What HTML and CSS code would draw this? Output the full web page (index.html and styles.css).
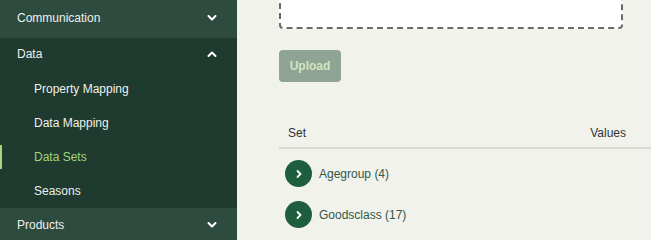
FILE: index.html
```html
<!DOCTYPE html>
<html>
<head>
<meta charset="utf-8">
<link rel="stylesheet" href="styles.css">
</head>
<body>
<div class="app">
  <nav class="sidebar">
    <div class="group group-light group-first">
      <div class="group-head">
        <span>Communication</span>
        <svg class="chev" width="10" height="6" viewBox="0 0 10 6"><path d="M1.5 1l3.5 3.5 3.5-3.5" fill="none" stroke="#fff" stroke-width="2" stroke-linecap="round" stroke-linejoin="round"/></svg>
      </div>
    </div>
    <div class="group group-dark">
      <div class="group-head group-head-open">
        <span>Data</span>
        <svg class="chev" width="10" height="6" viewBox="0 0 10 6"><path d="M1.5 5l3.5-3.5 3.5 3.5" fill="none" stroke="#fff" stroke-width="2" stroke-linecap="round" stroke-linejoin="round"/></svg>
      </div>
      <div class="item">Property Mapping</div>
      <div class="item">Data Mapping</div>
      <div class="item active">Data Sets</div>
      <div class="item">Seasons</div>
    </div>
    <div class="group group-light">
      <div class="group-head">
        <span>Products</span>
        <svg class="chev" width="10" height="6" viewBox="0 0 10 6"><path d="M1.5 1l3.5 3.5 3.5-3.5" fill="none" stroke="#fff" stroke-width="2" stroke-linecap="round" stroke-linejoin="round"/></svg>
      </div>
    </div>
  </nav>
  <main class="main">
    <div class="dropzone"></div>
    <button class="upload">Upload</button>
    <div class="table">
      <div class="thead">
        <span class="th-set">Set</span>
        <span class="th-values">Values</span>
      </div>
      <div class="rows">
        <div class="row">
          <span class="expand"><svg width="8" height="10" viewBox="0 0 8 10"><path d="M2.5 2l3 3-3 3" fill="none" stroke="#fff" stroke-width="1.8" stroke-linecap="round" stroke-linejoin="round"/></svg></span>
          <span class="row-label">Agegroup (4)</span>
        </div>
        <div class="row">
          <span class="expand"><svg width="8" height="10" viewBox="0 0 8 10"><path d="M2.5 2l3 3-3 3" fill="none" stroke="#fff" stroke-width="1.8" stroke-linecap="round" stroke-linejoin="round"/></svg></span>
          <span class="row-label">Goodsclass (17)</span>
        </div>
      </div>
    </div>
  </main>
</div>
</body>
</html>
```

FILE: styles.css
```css
* { box-sizing: border-box; }
html, body {
  margin: 0;
  padding: 0;
  width: 651px;
  height: 240px;
  overflow: hidden;
  background: #f2f2ed;
  font-family: "Liberation Sans", Arial, sans-serif;
  font-size: 12px;
}
.app {
  display: flex;
  height: 240px;
}
.sidebar {
  width: 237px;
  flex: none;
  display: flex;
  flex-direction: column;
  color: #eef0ec;
}
.group-light { background: #2e4b40; }
.group-dark { background: #1f3a2f; }
.group-head {
  height: 34px;
  display: flex;
  align-items: center;
  justify-content: space-between;
  padding: 0 20px 0 17px;
}
.group-first .group-head {
  height: 40px;
  margin-top: -2px;
}
.group-head-open {
  height: 31px;
  margin-bottom: 3px;
}
.chev { display: block; }
.item {
  height: 34px;
  display: flex;
  align-items: center;
  padding-left: 34px;
  position: relative;
}
.item.active { color: #a6d47c; }
.item.active::before {
  content: "";
  position: absolute;
  left: 0;
  top: 5px;
  width: 2px;
  height: 24px;
  background: #a6d47c;
}
.main {
  flex: 1;
  padding: 0 0 0 42px;
  display: flex;
  flex-direction: column;
  align-items: flex-start;
  min-width: 0;
}
.dropzone {
  width: 344px;
  height: 60px;
  margin-top: -31px;
  background: #fff;
  border: 2px dashed #6b6b6b;
  border-radius: 4px;
}
.upload {
  margin-top: 21px;
  width: 62px;
  height: 32px;
  border: none;
  border-radius: 4px;
  background: #8fa494;
  color: #d2e6bf;
  font-family: inherit;
  font-size: 12px;
  font-weight: 700;
  padding: 0;
}
.table {
  margin-top: 37px;
  width: 420px;
}
.thead {
  height: 30px;
  display: flex;
  align-items: center;
  justify-content: space-between;
  padding: 0 0 0 9px;
  border-bottom: 2px solid #d9d9d3;
  color: #333;
}
.th-values {
  margin-right: 73px;
}
.rows {
  padding-top: 4px;
}
.row {
  height: 41px;
  display: flex;
  align-items: center;
  gap: 7px;
  padding-left: 6px;
}
.expand {
  width: 27px;
  height: 27px;
  border-radius: 50%;
  background: #1e5e3f;
  display: flex;
  align-items: center;
  justify-content: center;
}
.row-label {
  color: #2f5846;
}
```
